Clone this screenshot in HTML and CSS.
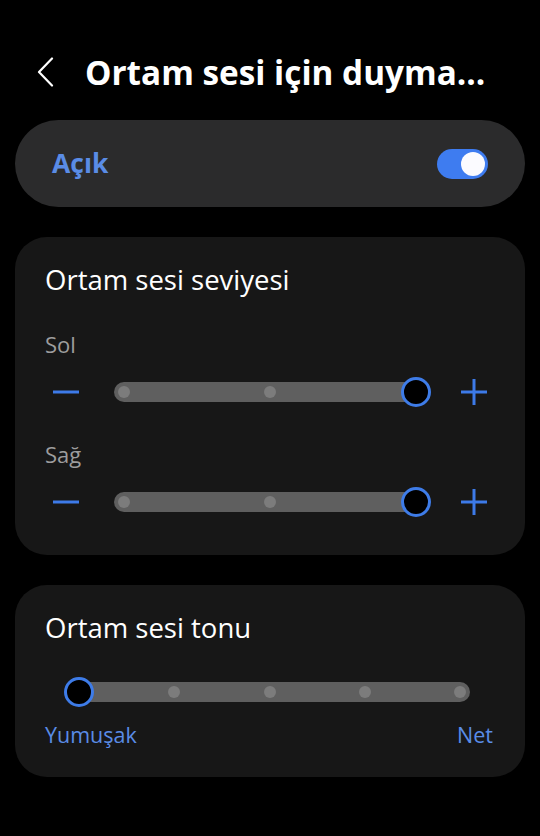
FILE: index.html
```html
<!DOCTYPE html>
<html lang="tr">
<head>
<meta charset="utf-8">
<title>Ortam sesi için duyma</title>
<link rel="stylesheet" href="styles.css">
</head>
<body>
<div class="page">
  <header class="header">
    <svg class="back" width="20" height="30" viewBox="0 0 20 30"><polyline points="16,1.5 3,15 16,28.5" fill="none" stroke="#ffffff" stroke-width="2.2" stroke-linecap="round" stroke-linejoin="round"/></svg>
    <h1 class="title">Ortam sesi için duyma...</h1>
  </header>

  <section class="card card-main">
    <span class="on-label">Açık</span>
    <div class="switch"><div class="knob"></div></div>
  </section>

  <section class="card card-level">
    <h2 class="card-title">Ortam sesi seviyesi</h2>
    <div class="side-label">Sol</div>
    <div class="slider-row">
      <div class="step-btn"><svg width="28" height="28" viewBox="0 0 28 28"><line x1="1" y1="14" x2="27" y2="14" stroke="#3d7ae8" stroke-width="3"/></svg></div>
      <div class="track track-level">
        <span class="dot"></span><span class="dot"></span><span class="dot"></span>
        <span class="thumb thumb-end"></span>
      </div>
      <div class="step-btn"><svg width="28" height="28" viewBox="0 0 28 28"><line x1="1" y1="14" x2="27" y2="14" stroke="#3d7ae8" stroke-width="3"/><line x1="14" y1="1" x2="14" y2="27" stroke="#3d7ae8" stroke-width="3"/></svg></div>
    </div>
    <div class="side-label side-label-2">Sağ</div>
    <div class="slider-row">
      <div class="step-btn"><svg width="28" height="28" viewBox="0 0 28 28"><line x1="1" y1="14" x2="27" y2="14" stroke="#3d7ae8" stroke-width="3"/></svg></div>
      <div class="track track-level">
        <span class="dot"></span><span class="dot"></span><span class="dot"></span>
        <span class="thumb thumb-end"></span>
      </div>
      <div class="step-btn"><svg width="28" height="28" viewBox="0 0 28 28"><line x1="1" y1="14" x2="27" y2="14" stroke="#3d7ae8" stroke-width="3"/><line x1="14" y1="1" x2="14" y2="27" stroke="#3d7ae8" stroke-width="3"/></svg></div>
    </div>
  </section>

  <section class="card card-tone">
    <h2 class="card-title">Ortam sesi tonu</h2>
    <div class="tone-row">
      <div class="track track-tone">
        <span class="dot"></span><span class="dot"></span><span class="dot"></span><span class="dot"></span><span class="dot"></span>
        <span class="thumb thumb-start"></span>
      </div>
    </div>
    <div class="tone-labels">
      <span>Yumuşak</span>
      <span>Net</span>
    </div>
  </section>
</div>
</body>
</html>
```

FILE: styles.css
```css
* { box-sizing: border-box; margin: 0; padding: 0; }

html, body {
  background: #000000;
}

body {
  font-family: "Open Sans", Roboto, "Liberation Sans", sans-serif;
  color: #ffffff;
  width: 540px;
  height: 836px;
  overflow: hidden;
}

.page {
  display: flex;
  flex-direction: column;
  padding: 0 15px;
}

.header {
  display: flex;
  align-items: center;
  height: 120px;
  padding-top: 24px;
  padding-left: 21px;
}

.back {
  flex: none;
  width: 20px;
  height: 30px;
}

.title {
  margin-left: 29px;
  font-size: 33.3px;
  font-weight: 700;
  line-height: 40px;
  letter-spacing: 0;
  white-space: nowrap;
}

.card {
  border-radius: 32px;
  background: #171717;
}

.card-main {
  height: 87px;
  border-radius: 44px;
  background: #2b2b2c;
  display: flex;
  align-items: center;
  justify-content: space-between;
  padding: 0 37px 0 37px;
}

.on-label {
  font-size: 26.5px;
  font-weight: 700;
  color: #5a8ce6;
  line-height: 32px;
  padding-bottom: 1px;
}

.switch {
  position: relative;
  width: 51px;
  height: 30px;
  border-radius: 15px;
  background: #3e7cf0;
}

.knob {
  position: absolute;
  right: 3px;
  top: 3px;
  width: 24px;
  height: 24px;
  border-radius: 50%;
  background: #fbfbff;
}

.card-level {
  margin-top: 30px;
  height: 318px;
  padding: 26px 0 0 0;
}

.card-title {
  font-size: 27.5px;
  font-weight: 400;
  line-height: 34px;
  padding-left: 30px;
  color: #ffffff;
}

.side-label {
  margin-top: 34px;
  padding-left: 30px;
  font-size: 22px;
  line-height: 26px;
  color: #9d9d9d;
}

.side-label-2 {
  margin-top: 29px;
}

.slider-row {
  display: flex;
  align-items: center;
  height: 40px;
  margin-top: 15px;
  padding: 0 24px 0 23px;
  gap: 20px;
}

.step-btn {
  width: 56px;
  height: 40px;
  display: flex;
  align-items: center;
  justify-content: center;
  flex: none;
}

.track {
  position: relative;
  height: 20px;
  border-radius: 10px;
  background: #5f5f5f;
  display: flex;
  align-items: center;
  justify-content: space-between;
  padding: 0 4px;
}

.track-level {
  width: 312px;
  flex: none;
}

.dot {
  width: 12px;
  height: 12px;
  border-radius: 50%;
  background: #7c7c7c;
}

.thumb {
  position: absolute;
  top: -5px;
  width: 30px;
  height: 30px;
  border-radius: 50%;
  background: #000000;
  border: 3px solid #3e7ce8;
}

.thumb-end { right: -5px; }
.thumb-start { left: -5px; }

.card-tone {
  margin-top: 30px;
  height: 192px;
  padding: 26px 0 0 0;
}

.tone-row {
  display: flex;
  align-items: center;
  height: 40px;
  margin-top: 27px;
  padding: 0 55px 0 54px;
}

.track-tone {
  flex: 1;
}

.tone-labels {
  display: flex;
  justify-content: space-between;
  padding: 0 32px 0 30px;
  margin-top: 10px;
  font-size: 21.5px;
  line-height: 26px;
  color: #5a8ce6;
}
```
